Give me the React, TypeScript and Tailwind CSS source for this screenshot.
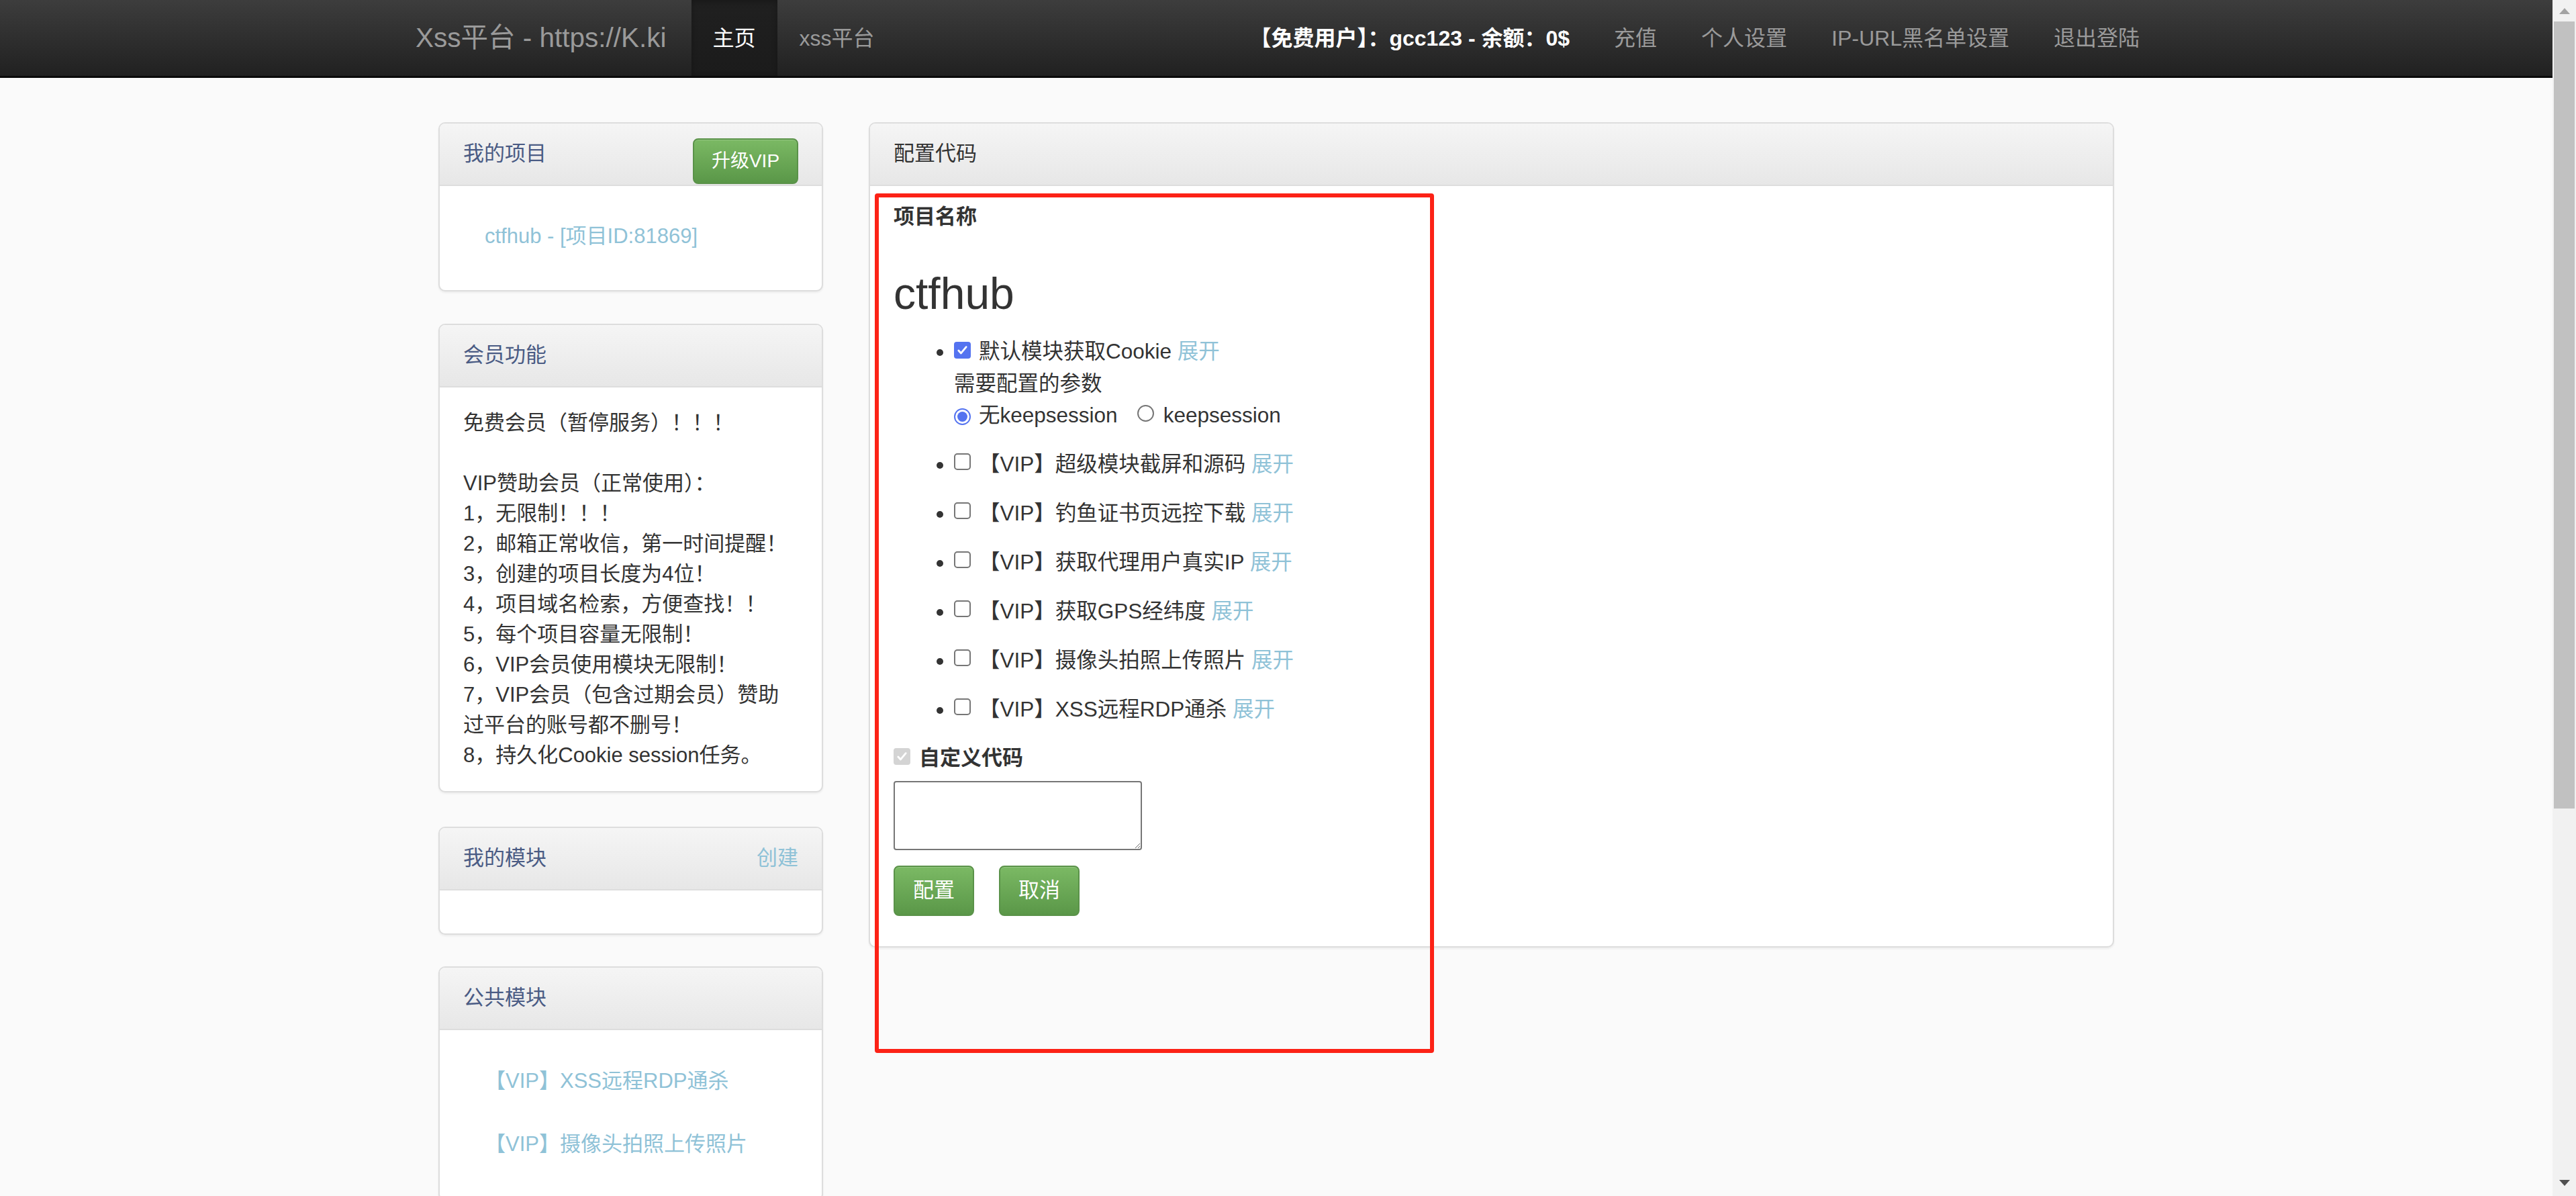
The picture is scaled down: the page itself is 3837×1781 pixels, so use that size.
import React from "react";

function Check({ disabled = false }: { disabled?: boolean }) {
  return (
    <span
      className={
        "inline-flex h-[25px] w-[25px] items-center justify-center rounded-[4px] align-[2px] " +
        (disabled ? "bg-[#d4d4d4]" : "bg-[#5473f0]")
      }
    >
      <svg viewBox="0 0 24 24" className="h-[21px] w-[21px]">
        <path d="M5.5 12.5l4.2 4.6L18.5 6.5" fill="none" stroke="#ffffff" strokeWidth="3.2" strokeLinecap="round" strokeLinejoin="round" />
      </svg>
    </span>
  );
}

function Box() {
  return <span className="inline-block h-[25px] w-[25px] rounded-[5px] border-2 border-[#767676] bg-white align-[2px]" />;
}

function Radio({ on = false }: { on?: boolean }) {
  return on ? (
    <span className="inline-flex h-[25px] w-[25px] items-center justify-center rounded-full border-2 border-[#5473f0] bg-white align-[1px]">
      <span className="h-[15px] w-[15px] rounded-full bg-[#5473f0]" />
    </span>
  ) : (
    <span className="inline-block h-[25px] w-[25px] rounded-full border-2 border-[#767676] bg-white align-[1px]" />
  );
}

function PanelHead({ children }: { children: React.ReactNode }) {
  return (
    <div className="flex h-[93px] items-center justify-between border-b-2 border-[#dddddd] bg-linear-to-b from-[#f5f5f5] to-[#e7e7e7] px-[35px]">
      {children}
    </div>
  );
}

const panel =
  "overflow-hidden rounded-[10px] border-2 border-[#dddddd] bg-white shadow-[0_2px_3px_rgba(0,0,0,0.06)]";

const greenBtn =
  "rounded-[8px] border-2 border-[#5a9249] bg-linear-to-b from-[#7bb964] to-[#5a9748] text-white shadow-[inset_0_1px_0_rgba(255,255,255,0.2)]";

const vipItems = [
  "【VIP】超级模块截屏和源码",
  "【VIP】钓鱼证书页远控下载",
  "【VIP】获取代理用户真实IP",
  "【VIP】获取GPS经纬度",
  "【VIP】摄像头拍照上传照片",
  "【VIP】XSS远程RDP通杀",
];

export default function App() {
  return (
    <div className="flex h-[1781px] w-full overflow-hidden bg-[#fafafa] font-['Liberation_Sans','Noto_Sans_CJK_SC',sans-serif] text-[#333333]">
      <div className="flex min-w-0 flex-1 flex-col">
        <div className="h-[2px] bg-white" />
        <nav className="h-[116px] shrink-0 border-b-[3px] border-[#0a0a0a] bg-linear-to-b from-[#3d3d3d] to-[#212121]">
          <div className="mx-auto flex h-full w-[2638px] items-stretch">
            <a className="flex items-center px-[37px] text-[40.5px] text-[#9a9a9a]">Xss平台 - https://K.ki</a>
            <a className="flex items-center bg-linear-to-b from-[#202020] to-[#1b1b1b] px-[32px] text-[32px] text-white shadow-[inset_0_3px_8px_rgba(0,0,0,0.25)]">
              主页
            </a>
            <a className="flex items-center px-[33px] text-[32px] text-[#9a9a9a]">xss平台</a>
            <div className="ml-auto flex items-stretch text-[32px]">
              <span className="flex items-center px-[33px] font-bold text-white">【免费用户】：gcc123 - 余额：0$</span>
              <a className="flex items-center px-[33px] text-[#9a9a9a]">充值</a>
              <a className="flex items-center px-[33px] text-[#9a9a9a]">个人设置</a>
              <a className="flex items-center px-[33px] text-[#9a9a9a]">IP-URL黑名单设置</a>
              <a className="flex items-center px-[33px] text-[#9a9a9a]">退出登陆</a>
            </div>
          </div>
        </nav>

        <div className="mx-auto mt-[66px] flex w-[2496px] items-start gap-[68px] text-[31px]">
          <aside className="w-[573px] shrink-0">
            <div className={panel + " mb-[48px]"}>
              <div className="flex h-[93px] justify-between border-b-2 border-[#dddddd] bg-linear-to-b from-[#f5f5f5] to-[#e7e7e7] px-[35px]">
                <span className="self-center text-[#4a5b84]">我的项目</span>
                <button className={greenBtn + " mb-[1px] h-[68px] w-[157px] self-end text-[28px]"}>升级VIP</button>
              </div>
              <div className="pb-[58px] pl-[67px] pt-[52px] leading-[45px] text-[#8fc2d7]">ctfhub - [项目ID:81869]</div>
            </div>

            <div className={panel + " mb-[51px]"}>
              <PanelHead>
                <span className="text-[#4a5b84]">会员功能</span>
              </PanelHead>
              <div className="px-[35px] pb-[31px] pt-[30px] leading-[45px]">
                <div>免费会员（暂停服务）！！！</div>
                <div className="h-[45px]" />
                <div>VIP赞助会员（正常使用）：</div>
                <div>1，无限制！！！</div>
                <div>2，邮箱正常收信，第一时间提醒！</div>
                <div>3，创建的项目长度为4位！</div>
                <div>4，项目域名检索，方便查找！！</div>
                <div>5，每个项目容量无限制！</div>
                <div>6，VIP会员使用模块无限制！</div>
                <div>7，VIP会员（包含过期会员）赞助</div>
                <div>过平台的账号都不删号！</div>
                <div>8，持久化Cookie session任务。</div>
              </div>
            </div>

            <div className={panel + " mb-[47px]"}>
              <PanelHead>
                <span className="text-[#4a5b84]">我的模块</span>
                <a className="text-[#8fc2d7]">创建</a>
              </PanelHead>
              <div className="h-[64px]" />
            </div>

            <div className={panel}>
              <PanelHead>
                <span className="text-[#4a5b84]">公共模块</span>
              </PanelHead>
              <div className="flex flex-col gap-[49px] pb-[60px] pl-[67px] pt-[53px] leading-[45px] text-[#8fc2d7]">
                <a>【VIP】XSS远程RDP通杀</a>
                <a>【VIP】摄像头拍照上传照片</a>
              </div>
            </div>
          </aside>

          <section className="relative w-[1855px] shrink-0">
            <div className={panel}>
              <PanelHead>
                <span className="text-[#333333]">配置代码</span>
              </PanelHead>
              <div className="px-[35px] pb-[45px] pt-[23px]">
                <p className="font-bold leading-[45px]">项目名称</p>
                <h2 className="mt-[55px] text-[66px] leading-[74px]">ctfhub</h2>
                <ul className="mt-[26px] list-disc pl-[90px] text-[31.5px] leading-[47.5px]">
                  <li className="mb-[25.5px]">
                    <div>
                      <Check />
                      <span className="ml-[12px]">默认模块获取Cookie </span>
                      <a className="text-[#8fc2d7]">展开</a>
                    </div>
                    <div>需要配置的参数</div>
                    <div>
                      <Radio on />
                      <span className="ml-[12px] mr-[29px]">无keepsession</span>
                      <Radio />
                      <span className="ml-[14px]">keepsession</span>
                    </div>
                  </li>
                  {vipItems.map((t) => (
                    <li key={t} className="mb-[25.5px]">
                      <Box />
                      <span className="ml-[12px]">{t} </span>
                      <a className="text-[#8fc2d7]">展开</a>
                    </li>
                  ))}
                </ul>
                <div className="leading-[45px]">
                  <Check disabled />
                  <span className="ml-[13px] font-bold">自定义代码</span>
                </div>
                <textarea className="mt-[12px] block h-[103px] w-[370px] rounded-[4px] border-2 border-[#767676] bg-white" />
                <div className="mt-[23px] flex gap-[37px]">
                  <button className={greenBtn + " h-[75px] w-[120px] text-[31px]"}>配置</button>
                  <button className={greenBtn + " h-[75px] w-[120px] text-[31px]"}>取消</button>
                </div>
              </div>
            </div>
            <div className="pointer-events-none absolute left-[9px] top-[106px] h-[1280px] w-[833px] rounded-[4px] border-[6px] border-[#fc2216]" />
          </section>
        </div>
      </div>

      <div className="flex h-[1781px] w-[35px] shrink-0 flex-col bg-[#f1f1f1]">
        <div className="flex h-[32px] items-center justify-center">
          <svg viewBox="0 0 16 9" className="h-[9px] w-[16px]">
            <polygon points="8,0 16,9 0,9" fill="#a3a3a3" />
          </svg>
        </div>
        <div className="mx-[2px] h-[1172px] bg-[#c1c1c1]" />
        <div className="flex-1" />
        <div className="flex h-[40px] items-center justify-center">
          <svg viewBox="0 0 16 9" className="h-[9px] w-[16px]">
            <polygon points="0,0 16,0 8,9" fill="#505050" />
          </svg>
        </div>
      </div>
    </div>
  );
}
